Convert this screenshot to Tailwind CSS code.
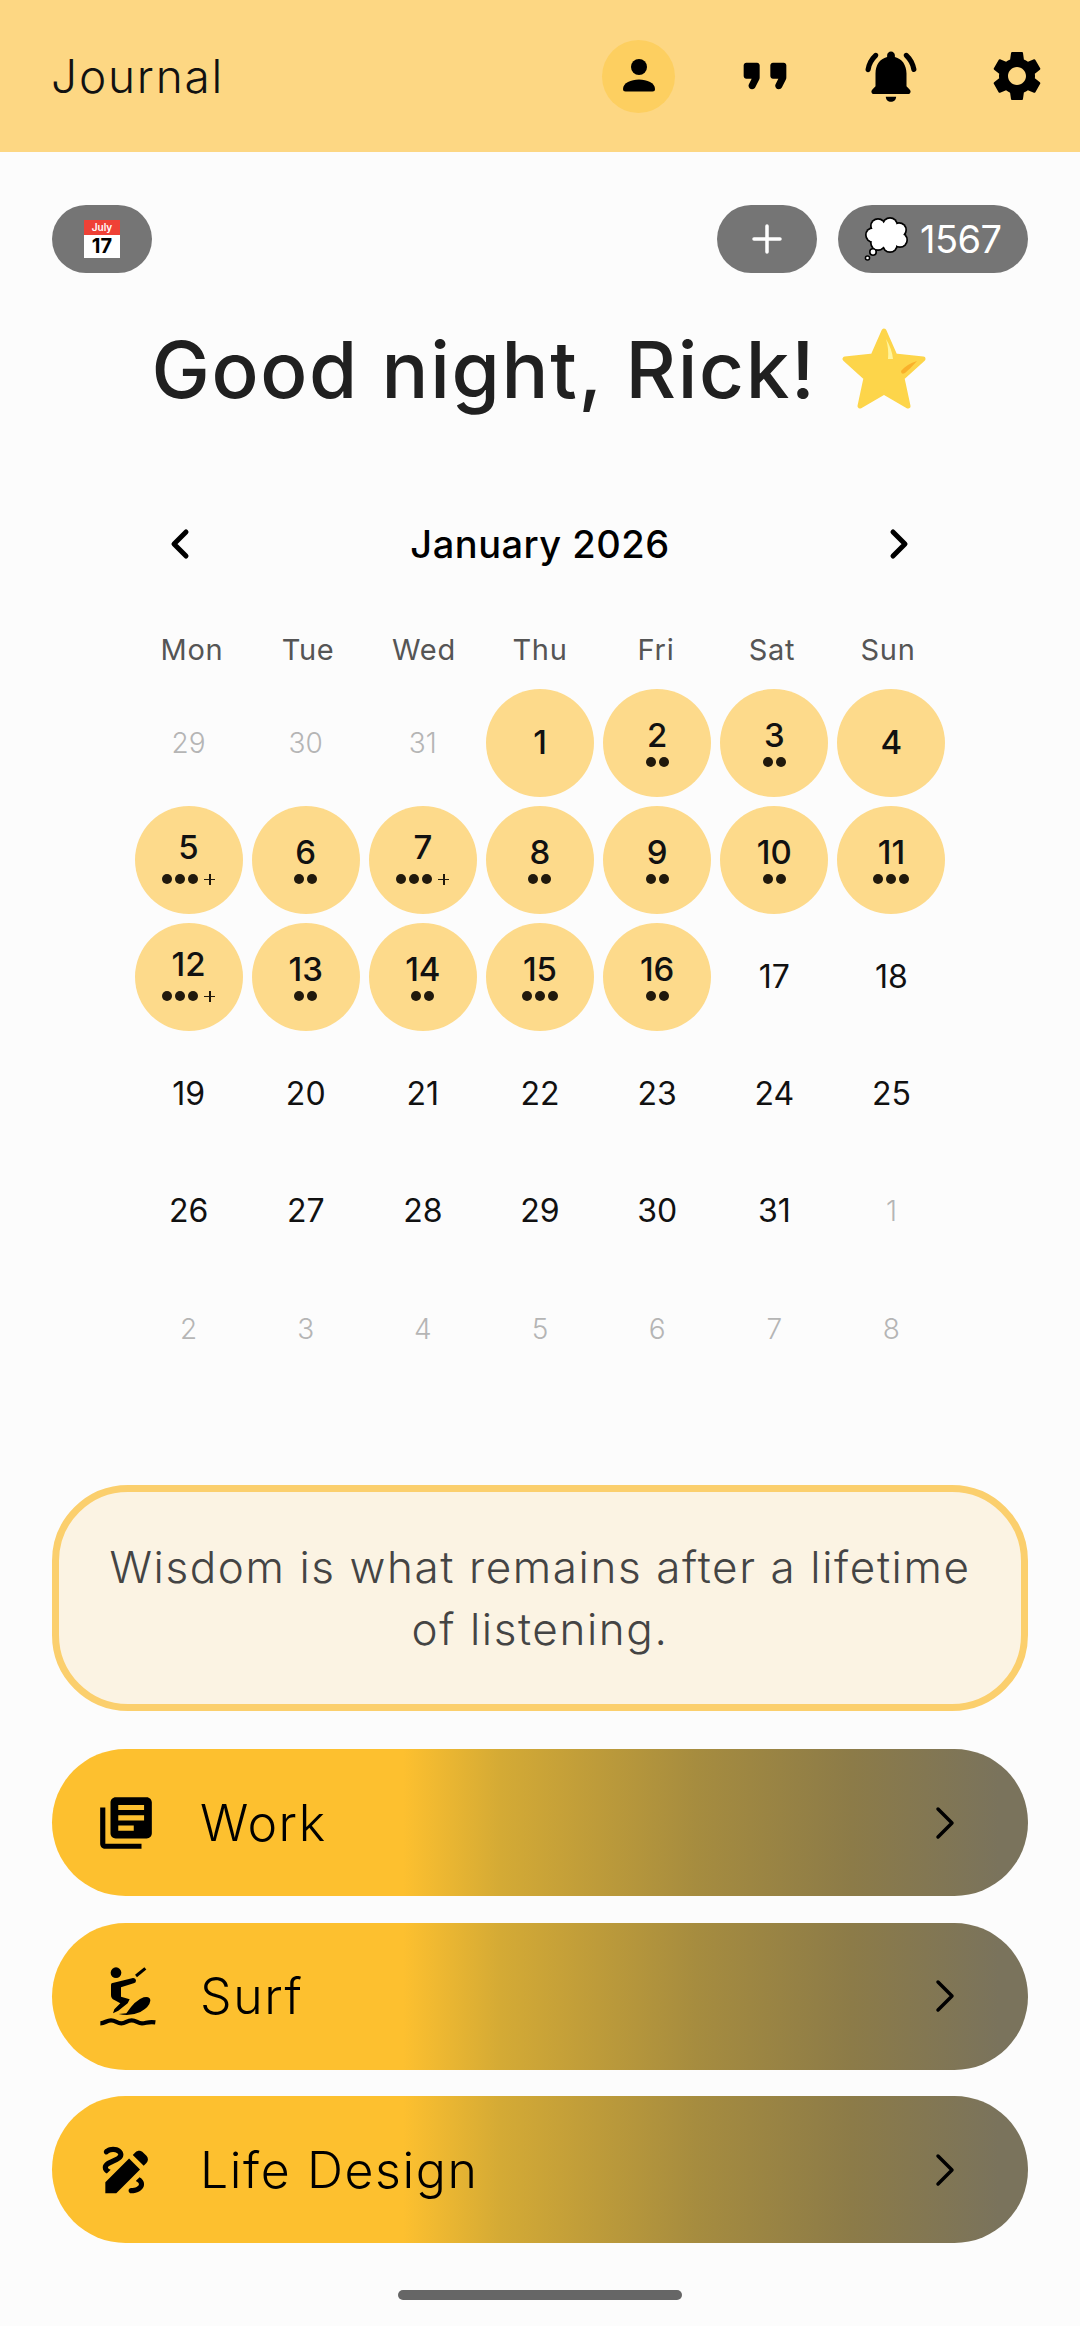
<!DOCTYPE html>
<html lang="en">
<head>
  <meta charset="UTF-8" />
  <title>Journal</title>
  <script src="https://cdn.jsdelivr.net/npm/@tailwindcss/browser@4"></script>
  <meta name="viewport" content="width=device-width, initial-scale=1.0" />
</head>
<body class="bg-[#fcfcfc] text-black font-['Inter','Liberation_Sans',sans-serif] w-[1080px] h-[2326px] overflow-hidden">

  <!-- Header -->
  <header class="h-[152px] bg-[#fdd783] flex items-center justify-between pl-[51px] pr-[27px]">
    <h1 class="text-[46px] font-light tracking-[1.8px] text-[#111] leading-none">Journal</h1>
    <div class="flex items-center gap-[53px]">
      <button class="w-[73px] h-[73px] rounded-full bg-[#fdcf60] flex items-center justify-center">
        <svg class="w-[60px] h-[60px]" viewBox="0 0 60 60" fill="currentColor"><circle cx="30" cy="21" r="8"/><path d="M16.500 45.500Q14 45.500 14 43C14 37 22 33.500 30 33.500C38 33.500 46 37 46 43Q46 45.500 43.500 45.500Z"/></svg>
      </button>
      <button class="w-[73px] h-[73px] flex items-center justify-center">
        <svg class="w-[64px] h-[64px]" viewBox="0 0 24 24" fill="currentColor"><path d="M7.170 17c.51 0 .98-.29 1.200-.74l1.420-2.840c.14-.28.21-.58.21-.89V8c0-.55-.45-1-1-1H5c-.55 0-1 .45-1 1v4c0 .55.45 1 1 1h2l-1.030 2.060c-.45.890.2 1.940 1.200 1.940zm10 0c.51 0 .98-.29 1.200-.74l1.420-2.840c.14-.28.21-.58.21-.89V8c0-.55-.45-1-1-1h-4c-.55 0-1 .45-1 1v4c0 .55.45 1 1 1h2l-1.030 2.060c-.45.890.2 1.940 1.200 1.940z"/></svg>
      </button>
      <button class="w-[73px] h-[73px] flex items-center justify-center">
        <svg class="w-[62px] h-[62px]" viewBox="0 0 24 24" fill="currentColor"><path d="M18 16v-5c0-3.070-1.640-5.640-4.500-6.320V4c0-.83-.67-1.500-1.500-1.500s-1.500.67-1.500 1.500v.68C7.630 5.360 6 7.920 6 11v5l-1.290 1.290c-.63.63-.19 1.710.7 1.710h13.170c.89 0 1.340-1.080.71-1.710L18 16zm-6.010 6c1.100 0 2-.9 2-2h-4c0 1.100.89 2 2 2zM6.770 4.730c.42-.38.43-1.030.03-1.430-.38-.38-1-.39-1.390-.02C3.700 4.840 2.520 6.960 2.140 9.340c-.09.61.38 1.160 1 1.160.48 0 .9-.35.98-.83.3-1.940 1.260-3.670 2.650-4.940zM18.600 3.280c-.4-.37-1.020-.36-1.400.02-.4.4-.38 1.040.03 1.420 1.380 1.270 2.350 3 2.650 4.940.07.48.49.83.98.83.61 0 1.090-.55.99-1.160-.38-2.370-1.550-4.480-3.250-6.050z"/></svg>
      </button>
      <button class="w-[73px] h-[73px] flex items-center justify-center">
        <svg class="w-[60px] h-[60px]" viewBox="0 0 24 24" fill="currentColor"><path d="M19.140 12.940c.04-.3.06-.61.06-.94 0-.32-.02-.64-.07-.94l2.030-1.580c.18-.14.23-.41.12-.61l-1.920-3.320c-.12-.22-.37-.29-.59-.22l-2.390.96c-.5-.38-1.030-.7-1.620-.94l-.36-2.540c-.04-.24-.24-.41-.48-.41h-3.840c-.24 0-.43.17-.47.41l-.36 2.540c-.59.24-1.130.57-1.620.94l-2.390-.96c-.22-.08-.47 0-.59.22L2.740 8.870c-.12.21-.08.47.12.61l2.030 1.580c-.05.3-.09.63-.09.94s.02.64.07.94l-2.030 1.580c-.18.14-.23.41-.12.61l1.920 3.320c.12.22.37.29.59.22l2.390-.96c.5.38 1.030.7 1.620.94l.36 2.540c.05.24.24.41.48.41h3.840c.24 0 .44-.17.47-.41l.36-2.540c.59-.24 1.130-.56 1.620-.94l2.390.96c.22.08.47 0 .59-.22l1.920-3.320c.12-.22.07-.47-.12-.61l-2.010-1.580zM12 15.600c-1.980 0-3.600-1.620-3.600-3.600s1.620-3.600 3.600-3.600 3.600 1.620 3.600 3.600-1.620 3.600-3.600 3.600z"/></svg>
      </button>
    </div>
  </header>

  <main class="px-[52px]">
    <!-- Pills -->
    <div class="mt-[53px] flex items-center justify-between">
      <button class="w-[100px] h-[68px] rounded-full bg-[#757575] flex items-center justify-center">
        <span class="w-[36px] h-[38px] flex flex-col">
          <span class="h-[15px] bg-[#ef4136] text-white text-[10px] font-semibold leading-[15px] text-center">July</span>
          <span class="h-[23px] bg-white text-black text-[20px] font-bold leading-[23px] text-center">17</span>
        </span>
      </button>
      <div class="flex items-center gap-[21px]">
        <button class="w-[100px] h-[68px] rounded-full bg-[#757575] flex items-center justify-center">
          <svg class="w-[30px] h-[30px]" viewBox="0 0 30 30" fill="none" stroke="white" stroke-width="3.500" stroke-linecap="round"><path d="M15 2v26M2 15h26"/></svg>
        </button>
        <button class="w-[190px] h-[68px] rounded-full bg-[#757575] flex items-center pl-[26px] gap-[12px]">
          <svg class="w-[44px] h-[44px] shrink-0" viewBox="0 0 44 44">
            <g fill="black"><circle cx="14" cy="9" r="8"/><circle cx="26" cy="8" r="8"/><circle cx="35" cy="13" r="8"/><circle cx="36" cy="23" r="8"/><circle cx="26" cy="28" r="8"/><circle cx="14" cy="26" r="8"/><circle cx="9" cy="18" r="8"/><circle cx="9" cy="35" r="4"/><circle cx="3.500" cy="41" r="2.800"/></g>
            <g fill="white"><circle cx="14" cy="9" r="6.300"/><circle cx="26" cy="8" r="6.300"/><circle cx="35" cy="13" r="6.300"/><circle cx="36" cy="23" r="6.300"/><circle cx="26" cy="28" r="6.300"/><circle cx="14" cy="26" r="6.300"/><circle cx="9" cy="18" r="6.300"/><circle cx="22" cy="18" r="12"/><circle cx="9" cy="35" r="2.400"/><circle cx="3.500" cy="41" r="1.300"/></g>
          </svg>
          <span class="text-white text-[38px] font-normal tracking-[-0.5px] leading-none">1567</span>
        </button>
      </div>
    </div>

    <!-- Greeting -->
    <div class="mt-[47px] h-[100px] flex items-center justify-center gap-[22px]">
      <h2 class="text-[78px] font-medium tracking-[1.7px] text-[#202020] leading-none whitespace-nowrap">Good night, Rick!</h2>
      <svg class="w-[90px] h-[90px] shrink-0" viewBox="0 0 90 90">
        <path d="M45 6 L56 31 L84 34 L63 53 L69 81 L45 67 L21 81 L27 53 L6 34 L34 31 Z" fill="#fdd54a" stroke="#fdd54a" stroke-width="5" stroke-linejoin="round"/>
        <path d="M47 14 Q53 24 54 34 L49 34 Q50 24 47 14Z" fill="#fff59d"/>
        <path d="M62 46 Q68 39 78 36 Q72 43 66 48 Q62 50 62 46Z" fill="#f9b02a"/>
      </svg>
    </div>

    <!-- Calendar -->
    <section class="mt-[99px] -mx-[52px] px-[130px]">
      <div class="flex items-center justify-between px-[25px] h-[50px]">
        <svg class="w-[50px] h-[50px]" viewBox="0 0 50 50" fill="none" stroke="black" stroke-width="5" stroke-linecap="round" stroke-linejoin="round"><path d="M32 15 L20 27 L32 39" transform="translate(-1 -2)"/></svg>
        <h3 class="text-[38px] font-medium tracking-[0.5px] leading-none">January 2026</h3>
        <svg class="w-[50px] h-[50px]" viewBox="0 0 50 50" fill="none" stroke="black" stroke-width="5" stroke-linecap="round" stroke-linejoin="round"><path d="M18 15 L30 27 L18 39" transform="translate(0 -2)"/></svg>
      </div>
      <div class="mt-[59px] grid grid-cols-7 text-center text-[29px] text-[#555] tracking-[0.7px] leading-[44px] px-[4px]">
        <div>Mon</div><div>Tue</div><div>Wed</div><div>Thu</div><div>Fri</div><div>Sat</div><div>Sun</div>
      </div>
      <div id="days" class="mt-[12px] grid grid-cols-7 auto-rows-[117.200px]"></div>
    </section>

    <!-- Quote -->
    <div class="mt-[98px] h-[226px] rounded-[76px] border-[7px] border-[#fbcf6d] bg-[#fbf3e3] flex items-center justify-center text-center px-[30px]">
      <p class="text-[44px] font-light tracking-[1.6px] text-[#444] leading-[62px] whitespace-nowrap">Wisdom is what remains after a lifetime<br>of listening.</p>
    </div>

    <!-- Journals -->
    <div class="mt-[38px] flex flex-col gap-[26.500px]">
      <a class="h-[147px] rounded-full bg-[linear-gradient(to_right,#fdc02f_36%,#d4aa35_46%,#a68c3f_66%,#8c7b48_82%,#7a735c_97%)] flex items-center pl-[43px] pr-[65px]">
        <svg class="w-[62px] h-[62px] shrink-0" viewBox="0 0 24 24" fill="currentColor"><path d="M4 6H2v14c0 1.100.9 2 2 2h14v-2H4V6zm16-4H8c-1.100 0-2 .9-2 2v12c0 1.100.9 2 2 2h12c1.100 0 2-.9 2-2V4c0-1.100-.9-2-2-2zm-1 9H9V9h10v2zm-4 4H9v-2h6v2zm4-8H9V5h10v2z"/></svg>
        <span class="ml-[43px] flex-1 text-[50px] font-light tracking-[1.6px] leading-none">Work</span>
        <svg class="w-[30px] h-[40px]" viewBox="0 0 30 40" fill="none" stroke="black" stroke-width="3.500" stroke-linecap="round" stroke-linejoin="round"><path d="M5 6 L19 20 L5 34"/></svg>
      </a>
      <a class="h-[147px] rounded-full bg-[linear-gradient(to_right,#fdc02f_36%,#d4aa35_46%,#a68c3f_66%,#8c7b48_82%,#7a735c_97%)] flex items-center pl-[43px] pr-[65px]">
        <svg class="w-[62px] h-[62px] shrink-0" viewBox="14 45 186 186" fill="currentColor">
          <circle cx="77" cy="68" r="16"/>
          <path d="M70 98L128 84Q136 84 137 92Q137 98 130 100L92 112L92 140L118 148L112 160L84 182L68 190L72 178L90 160L72 150Q62 146 62 135L62 105Q62 98 70 98Z"/>
          <path d="M108 190Q135 150 160 142Q180 138 180 152Q178 170 150 186Q120 200 85 192Z"/>
          <path d="M137 78L165 55" fill="none" stroke="currentColor" stroke-width="9"/>
          <path d="M30 220C45 220 48 211 62 211C76 211 80 220 93 220C106 220 110 211 124 211C138 211 142 220 155 220C168 220 172 214 195 217" fill="none" stroke="currentColor" stroke-width="13"/>
        </svg>
        <span class="ml-[43px] flex-1 text-[50px] font-light tracking-[1.6px] leading-none">Surf</span>
        <svg class="w-[30px] h-[40px]" viewBox="0 0 30 40" fill="none" stroke="black" stroke-width="3.500" stroke-linecap="round" stroke-linejoin="round"><path d="M5 6 L19 20 L5 34"/></svg>
      </a>
      <a class="h-[147px] rounded-full bg-[linear-gradient(to_right,#fdc02f_36%,#d4aa35_46%,#a68c3f_66%,#8c7b48_82%,#7a735c_97%)] flex items-center pl-[43px] pr-[65px]">
        <svg class="w-[62px] h-[62px] shrink-0" viewBox="0 0 24 24" fill="currentColor"><path d="M18.850 10.390l1.060-1.060c.78-.78.78-2.050 0-2.830L18.500 5.090c-.78-.78-2.050-.78-2.830 0l-1.060 1.060 4.240 4.240zm-5.660-2.830L4 16.760V21h4.240l9.190-9.190-4.240-4.250zM19 17.500c0 2.190-2.540 3.500-5 3.500-.55 0-1-.45-1-1s.45-1 1-1c1.540 0 3-.73 3-1.500 0-.47-.48-.87-1.230-1.200l1.480-1.480c1.070.63 1.750 1.470 1.750 2.680zM4.580 13.350C3.610 12.790 3 12.060 3 11c0-1.800 1.890-2.630 3.560-3.360C7.590 7.180 9 6.560 9 6c0-.41-.78-1-2-1-1.260 0-1.800.61-1.830.64-.35.41-.98.46-1.400.12-.41-.34-.49-.95-.15-1.380C3.730 4.240 4.760 3 7 3s4 1.320 4 3c0 1.870-1.930 2.720-3.640 3.470C6.420 9.880 5 10.500 5 11c0 .31.43.6 1.070.86l-1.490 1.490z"/></svg>
        <span class="ml-[43px] flex-1 text-[50px] font-light tracking-[1.6px] leading-none">Life Design</span>
        <svg class="w-[30px] h-[40px]" viewBox="0 0 30 40" fill="none" stroke="black" stroke-width="3.500" stroke-linecap="round" stroke-linejoin="round"><path d="M5 6 L19 20 L5 34"/></svg>
      </a>
    </div>
  </main>

  <!-- Home indicator -->
  <div class="absolute left-[398px] top-[2290px] w-[284px] h-[10px] rounded-full bg-[#666]"></div>

<script>
  // [label, dots, plus, muted] for each cell of the month
  const days = [
    ["29",0,0,1],["30",0,0,1],["31",0,0,1],["1",0,0,2],["2",2],["3",2],["4",0,0,2],
    ["5",3,1],["6",2],["7",3,1],["8",2],["9",2],["10",2],["11",3],
    ["12",3,1],["13",2],["14",2],["15",3],["16",2],["17"],["18"],
    ["19"],["20"],["21"],["22"],["23"],["24"],["25"],
    ["26"],["27"],["28"],["29"],["30"],["31"],["1",0,0,1],
    ["2",0,0,1],["3",0,0,1],["4",0,0,1],["5",0,0,1],["6",0,0,1],["7",0,0,1],["8",0,0,1]
  ];

  document.getElementById("days").innerHTML = days.map(function (d) {
    const dots = d[1] || 0, plus = d[2], kind = d[3] || 0;
    if (kind === 1) return '<div class="flex items-center justify-center text-[28px] font-light text-[#b5b5b5]">' + d[0] + '</div>';
    if (!dots && !kind) return '<div class="flex items-center justify-center text-[32px] font-normal text-[#111]">' + d[0] + '</div>';
    let marks = "";
    for (let i = 0; i < dots; i++) marks += '<span class="w-[10px] h-[10px] rounded-full bg-[#21190c]"></span>';
    if (plus) marks += '<span class="w-[11px] h-[11px] ml-[3px] relative"><span class="absolute left-0 top-[5px] w-[11px] h-[1.500px] bg-[#21190c]"></span><span class="absolute left-[5px] top-0 w-[1.500px] h-[11px] bg-[#21190c]"></span></span>';
    const inner = dots
      ? '<span class="leading-[34px] ' + (plus ? 'mb-[10px]' : 'mb-[5px]') + '">' + d[0] + '</span><span class="h-[10px] flex items-center gap-[3px] ' + (plus ? 'mb-[5px]' : '') + '">' + marks + '</span>'
      : '<span>' + d[0] + '</span>';
    return '<div class="flex items-center justify-center"><div class="w-[108px] h-[108px] rounded-full bg-[#fdda8b] flex flex-col items-center justify-center text-[33px] font-medium text-[#111]">' + inner + '</div></div>';
  }).join("");
</script>
</body>
</html>
